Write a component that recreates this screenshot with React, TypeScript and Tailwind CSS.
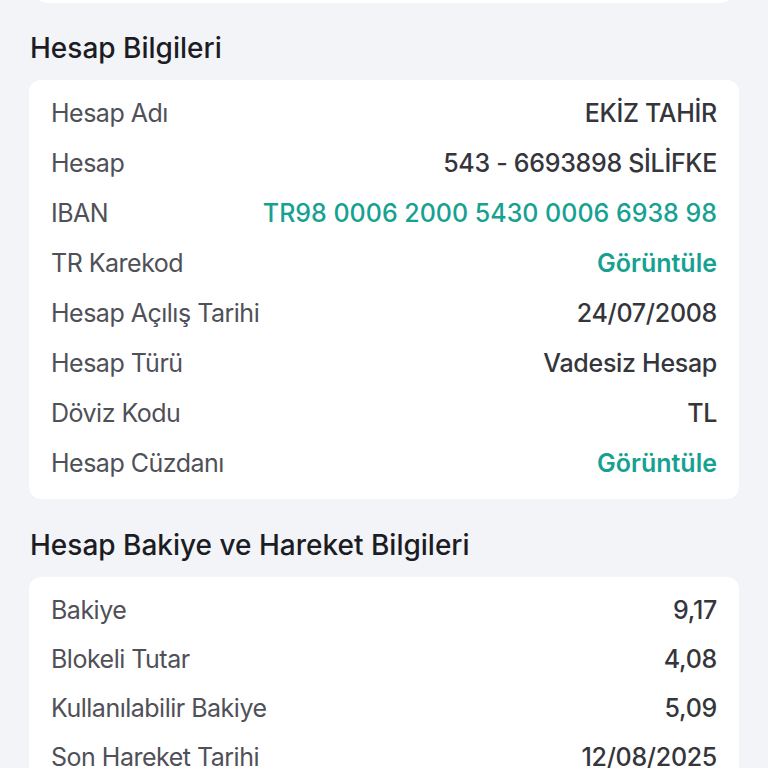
const accountRows = [
  { label: "Hesap Adı", value: "EKİZ TAHİR" },
  { label: "Hesap", value: "543 - 6693898 SİLİFKE" },
  { label: "IBAN", value: "TR98 0006 2000 5430 0006 6938 98", link: true },
  { label: "TR Karekod", value: "Görüntüle", link: true, bold: true },
  { label: "Hesap Açılış Tarihi", value: "24/07/2008" },
  { label: "Hesap Türü", value: "Vadesiz Hesap" },
  { label: "Döviz Kodu", value: "TL" },
  { label: "Hesap Cüzdanı", value: "Görüntüle", link: true, bold: true },
];

const balanceRows = [
  { label: "Bakiye", value: "9,17" },
  { label: "Blokeli Tutar", value: "4,08" },
  { label: "Kullanılabilir Bakiye", value: "5,09" },
  { label: "Son Hareket Tarihi", value: "12/08/2025" },
];

type Row = { label: string; value: string; link?: boolean; bold?: boolean };

function InfoRow({ row, h }: { row: Row; h: string }) {
  return (
    <div className={`flex items-center justify-between ${h}`}>
      <span className="tracking-[-0.5px] text-[#505058]">{row.label}</span>
      <span
        className={
          row.link
            ? `text-[#17a192] ${row.bold ? "font-semibold" : "font-medium"}`
            : "font-medium tracking-[-0.3px] text-[#35353c]"
        }
      >
        {row.value}
      </span>
    </div>
  );
}

export default function App() {
  return (
    <div
      className="h-[768px] w-[768px] overflow-hidden bg-[#f3f4f8] text-[25px] leading-none"
      style={{ fontFamily: "Inter, 'Noto Sans', sans-serif" }}
    >
      {/* previous card, cut off at the top */}
      <div className="mx-[35px] -mt-10 h-[43px] rounded-b-xl bg-white" />

      <h2 className="mt-[24px] h-[42px] pl-[30px] text-[28px] leading-[42px] font-medium text-[#1c1c24]">
        Hesap Bilgileri
      </h2>

      <div className="mx-[29px] mt-[11px] rounded-xl bg-white px-[22px] pt-[8px] pb-[11px]">
        {accountRows.map((r) => (
          <InfoRow key={r.label + r.value} row={r} h="h-[50px]" />
        ))}
      </div>

      <h2 className="mt-[25px] h-[42px] pl-[30px] text-[28px] leading-[42px] font-medium text-[#1c1c24]">
        Hesap Bakiye ve Hareket Bilgileri
      </h2>

      <div className="mx-[29px] mt-[11px] rounded-xl bg-white px-[22px] pt-[9px] pb-[8px]">
        {balanceRows.map((r) => (
          <InfoRow key={r.label} row={r} h="h-[49px]" />
        ))}
      </div>
    </div>
  );
}
